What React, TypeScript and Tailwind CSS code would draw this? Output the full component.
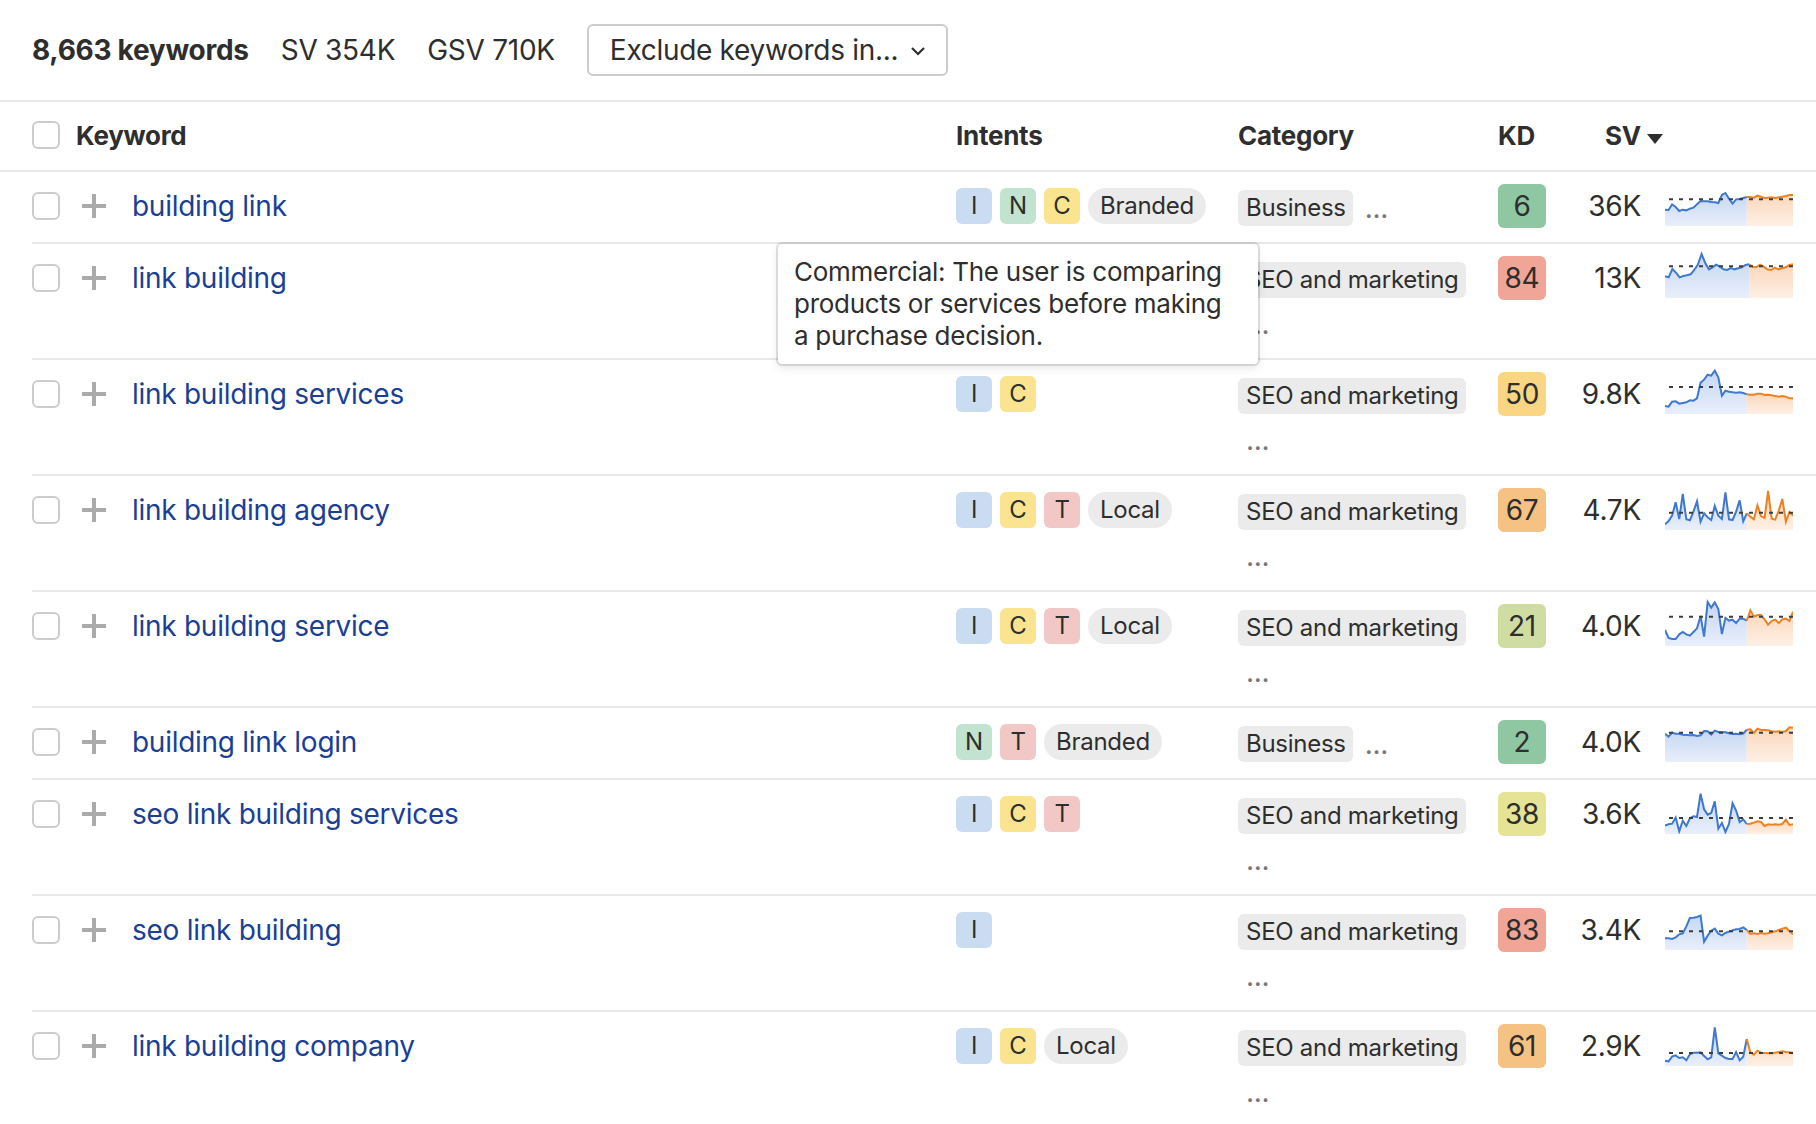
import { useId } from 'react';
import clsx from 'clsx';

type Intent = 'I' | 'N' | 'C' | 'T';

interface KeywordRow {
  keyword: string;
  intents: Intent[];
  label?: string;
  category: string;
  kd: number;
  kdClass: string;
  sv: string;
  average: number;
  trend: number[];
  tooltip?: string;
}

const INTENT_CLASSES: Record<Intent, string> = {
  I: 'bg-[#c9dcf2]',
  N: 'bg-[#c1e3d0]',
  C: 'bg-[#fae48f]',
  T: 'bg-[#f1c8c6]',
};

const ROW_GRID = 'grid grid-cols-[50px_50px_824px_282px_260px_48px_95px_1fr]';

// Index of the last known month, everything after it is forecast
const FORECAST_START = 23;

const rows: KeywordRow[] = [
  {
    keyword: 'building link',
    intents: ['I', 'N', 'C'],
    label: 'Branded',
    category: 'Business',
    kd: 6,
    kdClass: 'bg-[#8fc7a2]',
    sv: '36K',
    average: 80,
    trend: [49, 48, 65, 57, 45, 49, 47, 52, 55, 65, 75, 74, 74, 72, 71, 69, 93, 99, 82, 67, 80, 81, 84, 87, 87, 85, 91, 88, 84, 85, 86, 83, 86, 88, 90, 93, 93],
    tooltip: 'Commercial: The user is comparing products or services before making a purchase decision.',
  },
  {
    keyword: 'link building',
    intents: [],
    category: 'SEO and marketing',
    kd: 84,
    kdClass: 'bg-[#f0a597]',
    sv: '13K',
    average: 95,
    trend: [65, 62, 87, 76, 62, 66, 68, 71, 84, 100, 132, 105, 86, 92, 100, 94, 86, 84, 90, 86, 89, 92, 99, 101, 94, 93, 100, 94, 86, 84, 91, 86, 89, 92, 99, 101],
  },
  {
    keyword: 'link building services',
    intents: ['I', 'C'],
    category: 'SEO and marketing',
    kd: 50,
    kdClass: 'bg-[#fad583]',
    sv: '9.8K',
    average: 81,
    trend: [24, 22, 37, 38, 31, 33, 35, 41, 40, 47, 94, 103, 118, 115, 130, 110, 55, 70, 67, 65, 64, 65, 63, 59, 58, 58, 61, 61, 57, 58, 56, 54, 52, 54, 52, 47, 47],
  },
  {
    keyword: 'link building agency',
    intents: ['I', 'C', 'T'],
    label: 'Local',
    category: 'SEO and marketing',
    kd: 67,
    kdClass: 'bg-[#f5c284]',
    sv: '4.7K',
    average: 52,
    trend: [17, 27, 43, 83, 33, 108, 32, 29, 55, 86, 25, 50, 38, 30, 72, 43, 33, 113, 32, 30, 55, 89, 26, 50, 40, 32, 74, 42, 36, 117, 34, 31, 58, 93, 25, 54, 43],
  },
  {
    keyword: 'link building service',
    intents: ['I', 'C', 'T'],
    label: 'Local',
    category: 'SEO and marketing',
    kd: 21,
    kdClass: 'bg-[#cfdda3]',
    sv: '4.0K',
    average: 88,
    trend: [48, 24, 21, 21, 35, 42, 35, 31, 42, 53, 90, 28, 132, 115, 131, 111, 36, 84, 76, 79, 69, 82, 82, 76, 107, 88, 93, 93, 80, 64, 75, 79, 69, 80, 82, 75, 103],
  },
  {
    keyword: 'building link login',
    intents: ['N', 'T'],
    label: 'Branded',
    category: 'Business',
    kd: 2,
    kdClass: 'bg-[#8fc7a2]',
    sv: '4.0K',
    average: 88,
    trend: [85, 76, 88, 85, 85, 82, 81, 80, 81, 78, 80, 93, 92, 82, 94, 90, 90, 89, 86, 84, 85, 83, 85, 97, 98, 87, 100, 96, 96, 95, 92, 91, 92, 90, 93, 104, 103],
  },
  {
    keyword: 'seo link building services',
    intents: ['I', 'C', 'T'],
    category: 'SEO and marketing',
    kd: 38,
    kdClass: 'bg-[#e5e394]',
    sv: '3.6K',
    average: 48,
    trend: [25, 29, 31, 49, 8, 40, 24, 47, 53, 51, 121, 74, 58, 63, 98, 16, 33, 6, 30, 92, 70, 36, 44, 30, 31, 34, 38, 36, 24, 29, 28, 29, 28, 30, 43, 27, 29],
  },
  {
    keyword: 'seo link building',
    intents: ['I'],
    category: 'SEO and marketing',
    kd: 83,
    kdClass: 'bg-[#f0a597]',
    sv: '3.4K',
    average: 56,
    trend: [35, 35, 33, 38, 47, 50, 71, 96, 97, 99, 103, 25, 43, 58, 64, 49, 44, 51, 55, 59, 62, 63, 68, 60, 48, 50, 48, 51, 49, 50, 53, 56, 60, 64, 67, 57, 47],
  },
  {
    keyword: 'link building company',
    intents: ['I', 'C'],
    label: 'Local',
    category: 'SEO and marketing',
    kd: 61,
    kdClass: 'bg-[#f5c284]',
    sv: '2.9K',
    average: 39,
    trend: [16, 14, 28, 32, 24, 26, 17, 35, 40, 40, 41, 30, 20, 26, 116, 38, 31, 24, 21, 21, 42, 17, 28, 81, 41, 34, 46, 40, 39, 38, 38, 40, 42, 44, 42, 41, 40],
  },
];

function Checkbox({ label, className }: { label: string; className?: string }) {
  return (
    <input
      type="checkbox"
      aria-label={label}
      className={clsx('block size-7 shrink-0 appearance-none rounded-md border-2 border-[#cccccc] bg-white', className)}
    />
  );
}

function TrendChart({ trend, average }: { trend: number[]; average: number }) {
  const id = useId();
  const width = 384;
  const height = 162;
  const step = width / (trend.length - 1);
  const points = trend.map((value, i) => `${(i * step).toFixed(1)},${height - value}`);
  const past = points.slice(0, FORECAST_START + 1).join(' ');
  const forecast = points.slice(FORECAST_START).join(' ');
  const splitX = (FORECAST_START * step).toFixed(1);

  return (
    <svg viewBox="0 0 384 162" className="h-[54px] w-32">
      <defs>
        <linearGradient id={`${id}-past`} x1="0" y1="0" x2="0" y2="1">
          <stop offset="0" stopColor="#c4d7f1" />
          <stop offset="1" stopColor="#e9effb" />
        </linearGradient>
        <linearGradient id={`${id}-forecast`} x1="0" y1="0" x2="0" y2="1">
          <stop offset="0" stopColor="#fad7bc" />
          <stop offset="1" stopColor="#fef0e5" />
        </linearGradient>
      </defs>
      <polygon points={`0,${height} ${past} ${splitX},${height}`} fill={`url(#${id}-past)`} />
      <polygon points={`${splitX},${height} ${forecast} ${width},${height}`} fill={`url(#${id}-forecast)`} />
      <polyline points={past} fill="none" stroke="#3f78d0" strokeWidth="6" />
      <polyline points={forecast} fill="none" stroke="#ee8220" strokeWidth="6" />
      <line x1="12" x2={width} y1={height - average} y2={height - average} stroke="#3d3d3d" strokeWidth="6" strokeDasharray="12 18" />
    </svg>
  );
}

function IntentTag({ intent, tooltip }: { intent: Intent; tooltip?: string }) {
  return (
    <span className={clsx('relative flex h-9 w-9 items-center justify-center rounded-md text-2xl', INTENT_CLASSES[intent])}>
      {intent}
      {tooltip && (
        <span className="absolute top-14 -left-[266px] z-10 w-[480px] rounded-[4px] bg-white px-4 py-3 text-[26px] leading-8 shadow-[0_0_0_2px_rgba(0,0,0,0.11),0_4px_10px_rgba(0,0,0,0.1)]">
          {tooltip}
        </span>
      )}
    </span>
  );
}

function Row({ row }: { row: KeywordRow }) {
  return (
    <div className={clsx(ROW_GRID, 'ml-8 border-b-2 border-[#e8e8e8]')}>
      <Checkbox label={row.keyword} className="mt-5" />
      <svg viewBox="0 0 24 24" className="mt-[22px] size-6">
        <path d="M12 0v24M0 12h24" stroke="#aaaaaa" strokeWidth="4" />
      </svg>
      <a href="#" className="mt-[13px] h-[42px] text-[28px] leading-[42px] text-[#1a3f95]">{row.keyword}</a>
      <div className="mt-4 flex gap-2">
        {row.intents.map(intent => (
          <IntentTag key={intent} intent={intent} tooltip={intent === 'C' ? row.tooltip : undefined} />
        ))}
        {row.label && (
          <span className="flex h-9 items-center rounded-full bg-[#ebebeb] px-3 text-2xl">{row.label}</span>
        )}
      </div>
      <div className="mt-[14px] mb-3 flex flex-wrap gap-x-1 pr-7 text-2xl">
        <span className="my-1 flex h-9 items-center rounded-md bg-[#ebebeb] pr-[7px] pl-2 whitespace-nowrap">{row.category}</span>
        <span className="h-11 px-2 text-[28px] leading-[44px] text-[#777777]">...</span>
      </div>
      <div className={clsx('mt-3 flex h-11 items-center justify-center rounded-md text-[28px]', row.kdClass)}>{row.kd}</div>
      <div className="mt-[13px] text-right text-[28px] leading-[42px]">{row.sv}</div>
      <div className="pl-6">
        <TrendChart trend={row.trend} average={row.average} />
      </div>
    </div>
  );
}

export default function App() {
  return (
    <div className="h-[1124px] w-[1816px] overflow-hidden bg-white font-['Inter',sans-serif] tracking-[-0.27px] text-[#2e2e2e]">
      <header className="flex h-[102px] items-center gap-8 border-b-2 border-[#e8e8e8] pl-8 text-[28px]">
        <h1 className="font-bold">8,663 keywords</h1>
        <span>SV 354K</span>
        <span>GSV 710K</span>
        <button className="flex h-[52px] w-[361px] items-center justify-between rounded-md border-2 border-[#cccccc] pr-5 pl-[21px] tracking-[-0.3px]">
          Exclude keywords in...
          <svg viewBox="0 0 16 10" className="mt-0.5 h-[10px] w-4" fill="none" stroke="#2e2e2e" strokeWidth="2.2">
            <path d="M2 2l6 6 6-6" />
          </svg>
        </button>
      </header>

      <div className="border-b-2 border-[#e8e8e8] pl-8 text-[26px] font-bold">
        <div className={clsx(ROW_GRID, 'h-[68px] items-center pb-0.5')}>
          <div className="col-span-3 flex items-center gap-4">
            <Checkbox label="Select all" />
            Keyword
          </div>
          <div>Intents</div>
          <div>Category</div>
          <div>KD</div>
          <div className="text-right">SV</div>
          <svg viewBox="0 0 16 10" className="mt-2 ml-1.5 h-[10px] w-4">
            <path d="M0 0h16L8 10z" fill="#2e2e2e" />
          </svg>
        </div>
      </div>

      {rows.map(row => (
        <Row key={row.keyword} row={row} />
      ))}
    </div>
  );
}
